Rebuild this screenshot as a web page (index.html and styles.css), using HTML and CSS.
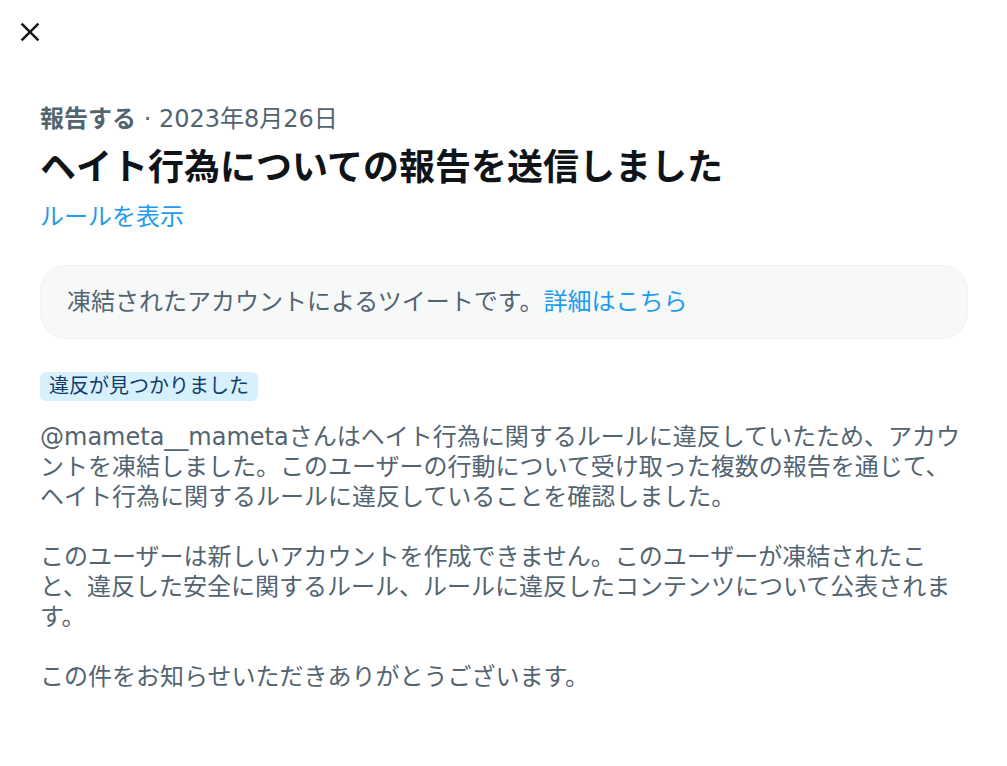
FILE: index.html
```html
<!DOCTYPE html>
<html lang="ja">
<head>
    <meta charset="UTF-8">
    <meta name="viewport" content="width=device-width, initial-scale=1.0">
    <title>報告</title>
    <link rel="stylesheet" href="styles.css">
</head>
<body>
    <div class="topbar">
        <button class="close-button" aria-label="閉じる">
            <svg viewBox="0 0 24 24" class="close-icon">
                <path d="M10.59 12L4.54 5.96l1.42-1.42L12 10.59l6.04-6.05 1.42 1.42L13.41 12l6.05 6.04-1.42 1.42L12 13.41l-6.04 6.05-1.42-1.42L10.59 12z"></path>
            </svg>
        </button>
    </div>

    <main class="report">
        <div class="report-meta">
            <strong>報告する</strong> · 2023年8月26日
        </div>
        <h1 class="report-title">ヘイト行為についての報告を送信しました</h1>
        <a href="#" class="rules-link">ルールを表示</a>

        <div class="notice">
            凍結されたアカウントによるツイートです。<a href="#">詳細はこちら</a>
        </div>

        <span class="badge">違反が見つかりました</span>

        <div class="report-body">
            <p>@mameta__mametaさんはヘイト行為に関するルールに違反していたため、アカウントを凍結しました。このユーザーの行動について受け取った複数の報告を通じて、ヘイト行為に関するルールに違反していることを確認しました。</p>
            <p>このユーザーは新しいアカウントを作成できません。このユーザーが凍結されたこと、違反した安全に関するルール、ルールに違反したコンテンツについて公表されます。</p>
            <p>この件をお知らせいただきありがとうございます。</p>
        </div>
    </main>
</body>
</html>
```

FILE: styles.css
```css
:root {
    --text-primary: #0f1419;
    --text-secondary: #536471;
    --link-color: #1d9bf0;
    --notice-bg: #f7f9f9;
    --notice-border: #eff3f4;
    --badge-bg: #d6f1fc;
    --badge-text: #123b6d;
}

* {
    margin: 0;
    padding: 0;
    box-sizing: border-box;
}

body {
    font-family: "DejaVu Sans", "Noto Sans CJK JP", sans-serif;
    background-color: #ffffff;
    color: var(--text-secondary);
    font-size: 24px;
    line-height: 30px;
}

a {
    color: var(--link-color);
    text-decoration: none;
}

.topbar {
    padding: 17px 0 0 15px;
    height: 47px;
}

.close-button {
    display: block;
    width: 30px;
    height: 30px;
    background: none;
    border: none;
    cursor: pointer;
}

.close-icon {
    display: block;
    width: 30px;
    height: 30px;
    fill: var(--text-primary);
}

.report {
    padding: 57px 39px 0 40px;
    display: flex;
    flex-direction: column;
    align-items: flex-start;
}

.report-meta {
    font-size: 24px;
    line-height: 30px;
}

.report-meta strong {
    font-weight: 700;
}

.report-title {
    margin-top: 11px;
    font-size: 36px;
    line-height: 46px;
    font-weight: 700;
    color: var(--text-primary);
}

.rules-link {
    margin-top: 11px;
    line-height: 30px;
}

.notice {
    align-self: stretch;
    margin-top: 33px;
    padding: 21px 26px;
    background-color: var(--notice-bg);
    border: 1px solid var(--notice-border);
    border-radius: 26px;
}

.badge {
    margin-top: 33px;
    padding: 0 9px;
    font-size: 20px;
    line-height: 29px;
    background-color: var(--badge-bg);
    color: var(--badge-text);
    border-radius: 6px;
}

.report-body {
    margin-top: 21px;
}

.report-body p + p {
    margin-top: 30px;
}
```
